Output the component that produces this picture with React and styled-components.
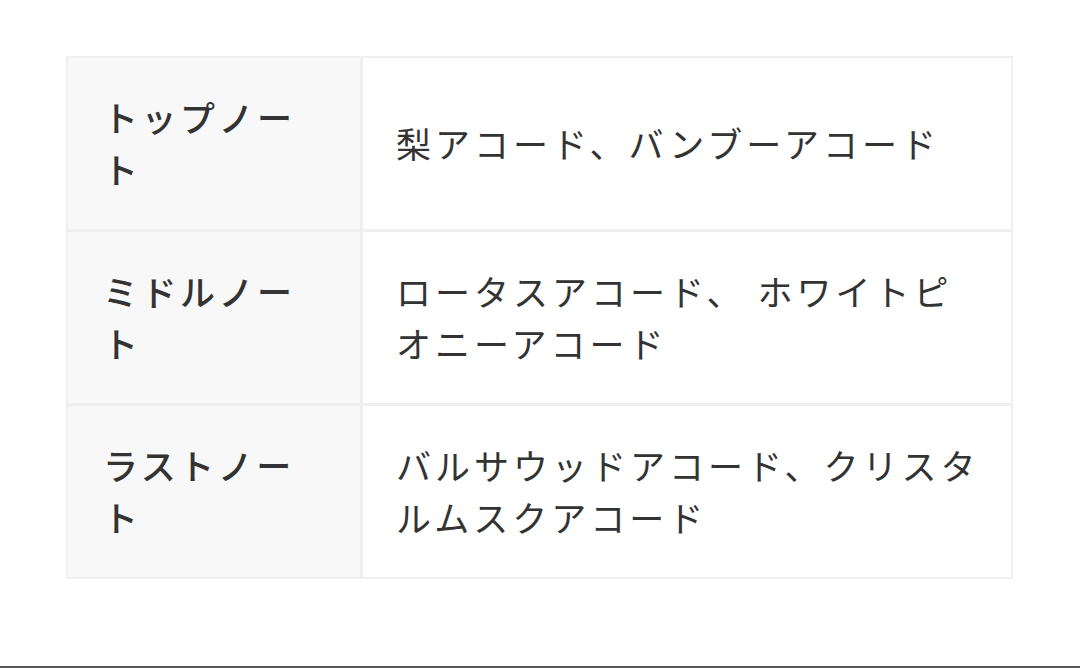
import React from "react";
import styled, { createGlobalStyle } from "styled-components";

const Global = createGlobalStyle`
  html, body { margin: 0; padding: 0; background: #ffffff; }
  body { font-family: "Noto Sans CJK JP", "Noto Sans", sans-serif; color: #333333; }
`;

const Page = styled.div`
  min-height: 100vh;
  display: flex;
  flex-direction: column;
  box-sizing: border-box;
`;

const Main = styled.main`
  flex: 1;
  padding: 56px 0 0 66px;
`;

const Table = styled.div`
  width: 947px;
  box-sizing: border-box;
  display: grid;
  grid-template-columns: 292px 1fr;
  gap: 3px;
  padding: 2px;
  background: #efefef;
`;

const Cell = styled.div`
  box-sizing: border-box;
  display: flex;
  align-items: center;
  padding: 33px ${p => (p.$head ? "36px" : "28px")} 34px ${p => (p.$head ? "35px" : "33px")};
  background: ${p => (p.$head ? "#f8f8f8" : "#ffffff")};
  font-size: 35px;
  letter-spacing: ${p => (p.$head ? "3.5px" : "4px")};
  line-height: 52px;
  font-weight: ${p => (p.$head ? 500 : 400)};
  color: #333333;
`;

const Footer = styled.div`
  height: 2px;
  background: #555555;
`;

const rows = [
  ["トップノート", "梨アコード、バンブーアコード"],
  ["ミドルノート", "ロータスアコード、 ホワイトピオニーアコード"],
  ["ラストノート", "バルサウッドアコード、クリスタルムスクアコード"],
];

export default function App() {
  return (
    <Page>
      <Global />
      <Main>
        <Table>
          {rows.map(([h, v]) => (
            <React.Fragment key={h}>
              <Cell $head>{h}</Cell>
              <Cell>{v}</Cell>
            </React.Fragment>
          ))}
        </Table>
      </Main>
      <Footer />
    </Page>
  );
}
